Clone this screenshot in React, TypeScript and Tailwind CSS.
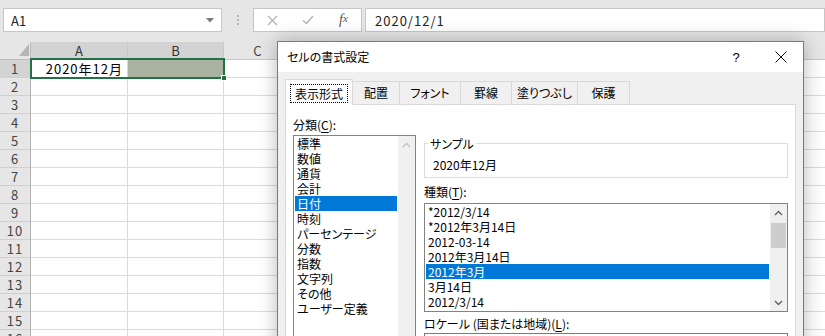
import React from "react";

const COLS = [
  { label: "A", w: 97, sel: true },
  { label: "B", w: 96, sel: true },
  { label: "C", w: 68, sel: false },
  { label: "", w: 96, sel: false },
  { label: "", w: 96, sel: false },
  { label: "", w: 96, sel: false },
  { label: "", w: 96, sel: false },
  { label: "", w: 96, sel: false },
  { label: "", w: 120, sel: false },
];

const ROWS = Array.from({ length: 16 }, (_, i) => i + 1);

const CATS = ["標準", "数値", "通貨", "会計", "日付", "時刻", "パーセンテージ", "分数", "指数", "文字列", "その他", "ユーザー定義"];
const TYPES = ["*2012/3/14", "*2012年3月14日", "2012-03-14", "2012年3月14日", "2012年3月", "3月14日", "2012/3/14"];

function ChevronUp({ color }: { color: string }) {
  return (
    <svg width="9" height="6" viewBox="0 0 9 6">
      <path d="M1 5 L4.5 1.5 L8 5" fill="none" stroke={color} strokeWidth="1.4" />
    </svg>
  );
}
function ChevronDown({ color }: { color: string }) {
  return (
    <svg width="9" height="6" viewBox="0 0 9 6">
      <path d="M1 1 L4.5 4.5 L8 1" fill="none" stroke={color} strokeWidth="1.4" />
    </svg>
  );
}

export default function App() {
  return (
    <div className="relative h-[336px] w-[825px] overflow-hidden bg-white font-['Noto_Sans_CJK_JP','Noto_Sans',sans-serif] text-[#222]">
      {/* Formula bar */}
      <div className="flex h-[42px] items-start bg-[#e6e6e6] pt-[8px]">
        <div className="ml-[3px] flex h-[24px] w-[219px] items-center justify-between border border-[#c6c6c6] bg-white pl-[7px] pr-[7px] text-[13px] leading-none">
          <span>A1</span>
          <svg width="8" height="5" viewBox="0 0 8 5">
            <path d="M0 0 H8 L4 4.5 Z" fill="#7a7a7a" />
          </svg>
        </div>
        <div className="flex h-[24px] w-[31px] flex-col items-center justify-center gap-[2px]">
          <div className="h-[2px] w-[2px] bg-[#b5b5b5]" />
          <div className="h-[2px] w-[2px] bg-[#b5b5b5]" />
          <div className="h-[2px] w-[2px] bg-[#b5b5b5]" />
        </div>
        <div className="flex h-[24px] w-[109px] items-center border border-[#c6c6c6] bg-white">
          <div className="flex w-[36px] justify-center">
            <svg width="11" height="11" viewBox="0 0 11 11">
              <path d="M1 1 L10 10 M10 1 L1 10" stroke="#b0b0b0" strokeWidth="1.2" />
            </svg>
          </div>
          <div className="flex w-[36px] justify-center">
            <svg width="12" height="10" viewBox="0 0 12 10">
              <path d="M1 5.5 L4.5 8.5 L11 1" fill="none" stroke="#b0b0b0" strokeWidth="1.3" />
            </svg>
          </div>
          <div className="flex w-[35px] justify-center font-['Liberation_Serif',serif] text-[14px] italic leading-none text-[#555]">
            f<span className="text-[11px]">x</span>
          </div>
        </div>
        <div className="ml-[3px] flex h-[24px] flex-1 items-center border border-[#c6c6c6] bg-white pl-[9px] text-[13px] leading-none tracking-[1px]">
          2020/12/1
        </div>
      </div>

      {/* Column headers */}
      <div className="flex h-[18px]">
        <div className="relative w-[31px] shrink-0 border-b border-r border-[#bdbdbd] bg-[#e6e6e6]">
          <svg className="absolute left-[19px] top-[2px]" width="10" height="12" viewBox="0 0 10 12">
            <path d="M10 0 V12 H0 Z" fill="#b5b5b5" />
          </svg>
        </div>
        {COLS.map((c, ci) => (
          <div
            key={ci}
            style={{ width: c.w }}
            className={`flex shrink-0 items-center justify-center border-b border-r border-[#c8c8c8] text-[13px] leading-none ${
              c.sel ? "bg-[#d3d3d3] text-[#333]" : "bg-[#e6e6e6] text-[#444]"
            }`}
          >
            {c.label}
          </div>
        ))}
      </div>

      {/* Rows */}
      {ROWS.map((r) => (
        <div key={r} className="flex h-[18px]">
          <div
            className={`flex w-[31px] shrink-0 items-center justify-center border-b border-r border-b-[#cfcfcf] border-r-[#b0b0b0] text-[13px] leading-none tracking-[1px] ${
              r === 1 ? "bg-[#d3d3d3]" : "bg-[#e6e6e6]"
            } text-[#444]`}
          >
            {r}
          </div>
          {COLS.map((c, ci) => (
            <div
              key={ci}
              style={{ width: c.w }}
              className={`flex shrink-0 items-center justify-end border-b border-r border-[#dadada] pr-[4px] text-[13px] leading-none tracking-[1px] text-black ${
                r === 1 && ci === 1 ? "bg-[#aab3a1]" : ""
              }`}
            >
              {r === 1 && ci === 0 ? "2020年12月" : ""}
            </div>
          ))}
        </div>
      ))}

      {/* Selection */}
      <div className="absolute left-[30px] top-[58px] h-[21px] w-[195px] border-2 border-[#217346]" />
      <div className="absolute left-[221px] top-[75px] h-[6px] w-[6px] border border-white bg-[#217346]" />

      {/* Dialog */}
      <div className="absolute left-[277px] top-[41px] h-[320px] w-[527px] border border-[#7a7a7a] bg-[#f0f0f0] text-[12px] text-black shadow-[0_0_18px_rgba(0,0,0,0.28)] [font-feature-settings:'palt']">
        {/* Title bar */}
        <div className="flex h-[30px] items-center bg-white pl-[9px]">
          <span className="leading-none">セルの書式設定</span>
          <div className="ml-auto flex items-center">
            <div className="w-[20px] text-center font-['Liberation_Sans',sans-serif] text-[13px] leading-none">?</div>
            <div className="ml-[22px] flex w-[26px] justify-center">
              <svg width="12" height="12" viewBox="0 0 12 12">
                <path d="M0.5 0.5 L11.5 11.5 M11.5 0.5 L0.5 11.5" stroke="#111" strokeWidth="1" />
              </svg>
            </div>
            <div className="w-[9px]" />
          </div>
        </div>

        {/* Tabs */}
        <div className="flex h-[32px] items-end pl-[7px]">
          <div className="relative z-10 -mb-px flex h-[26px] w-[68px] items-start justify-center border-l border-r border-t border-[#d9d9d9] bg-white pt-[4px]">
            <div className="border border-dotted border-black px-[4px] py-[1px] leading-[15px]">表示形式</div>
          </div>
          {[
            { t: "配置", w: 47 },
            { t: "フォント", w: 61 },
            { t: "罫線", w: 51 },
            { t: "塗りつぶし", w: 66 },
            { t: "保護", w: 52 },
          ].map((tab) => (
            <div
              key={tab.t}
              style={{ width: tab.w }}
              className="flex h-[23px] items-center justify-center border-r border-t border-[#d9d9d9] bg-[#f0f0f0] pb-[1px] leading-[15px]"
            >
              {tab.t}
            </div>
          ))}
        </div>

        {/* Panel */}
        <div className="mx-[7px] flex h-[260px] border border-[#d9d9d9] bg-white pl-[7px]">
          {/* Left column */}
          <div className="flex w-[123px] flex-col">
            <div className="mt-[12px] h-[15px] leading-[15px]">
              分類(<span className="underline underline-offset-2">C</span>):
            </div>
            <div className="mt-[3px] flex h-[220px] border border-[#828282] bg-white">
              <div className="flex-1">
                {CATS.map((c, i) => (
                  <div
                    key={c}
                    className={`mx-[1px] h-[15px] whitespace-nowrap pl-[2px] leading-[15px] ${
                      i === 4 ? "bg-[#0078d7] text-white" : ""
                    }`}
                  >
                    {c}
                  </div>
                ))}
              </div>
              <div className="flex w-[17px] flex-col items-center bg-[#f0f0f0] pt-[6px]">
                <ChevronUp color="#c2c2c2" />
              </div>
            </div>
          </div>

          {/* Right column */}
          <div className="ml-[8px] flex w-[364px] flex-col">
            <div className="relative mt-[38px] h-[35px] border border-[#dcdcdc] pl-[8px] pt-[13px]">
              <div className="absolute -top-[8px] left-[3px] bg-white px-[2px] leading-[15px]">サンプル</div>
              <div className="leading-[15px]">2020年12月</div>
            </div>
            <div className="mt-[6px] h-[15px] leading-[15px]">
              種類(<span className="underline underline-offset-2">T</span>):
            </div>
            <div className="mt-[4px] flex h-[109px] border border-[#828282] bg-white">
              <div className="flex-1">
                {TYPES.map((t, i) => (
                  <div
                    key={t + i}
                    className={`mx-[1px] h-[15px] whitespace-nowrap pl-[2px] leading-[15px] ${
                      i === 4 ? "bg-[#0078d7] text-white" : ""
                    }`}
                  >
                    {t}
                  </div>
                ))}
              </div>
              <div className="flex w-[17px] flex-col items-center bg-[#f0f0f0]">
                <div className="flex h-[17px] items-center justify-center">
                  <ChevronUp color="#606060" />
                </div>
                <div className="mt-[2px] h-[25px] w-[15px] bg-[#cdcdcd]" />
                <div className="flex-1" />
                <div className="flex h-[17px] items-center justify-center">
                  <ChevronDown color="#606060" />
                </div>
              </div>
            </div>
            <div className="mt-[4px] h-[15px] leading-[15px]">
              ロケール (国または地域)(<span className="underline underline-offset-2">L</span>):
            </div>
            <div className="mt-[2px] h-[24px] border border-[#7a7a7a] bg-white" />
          </div>
        </div>
      </div>
    </div>
  );
}
